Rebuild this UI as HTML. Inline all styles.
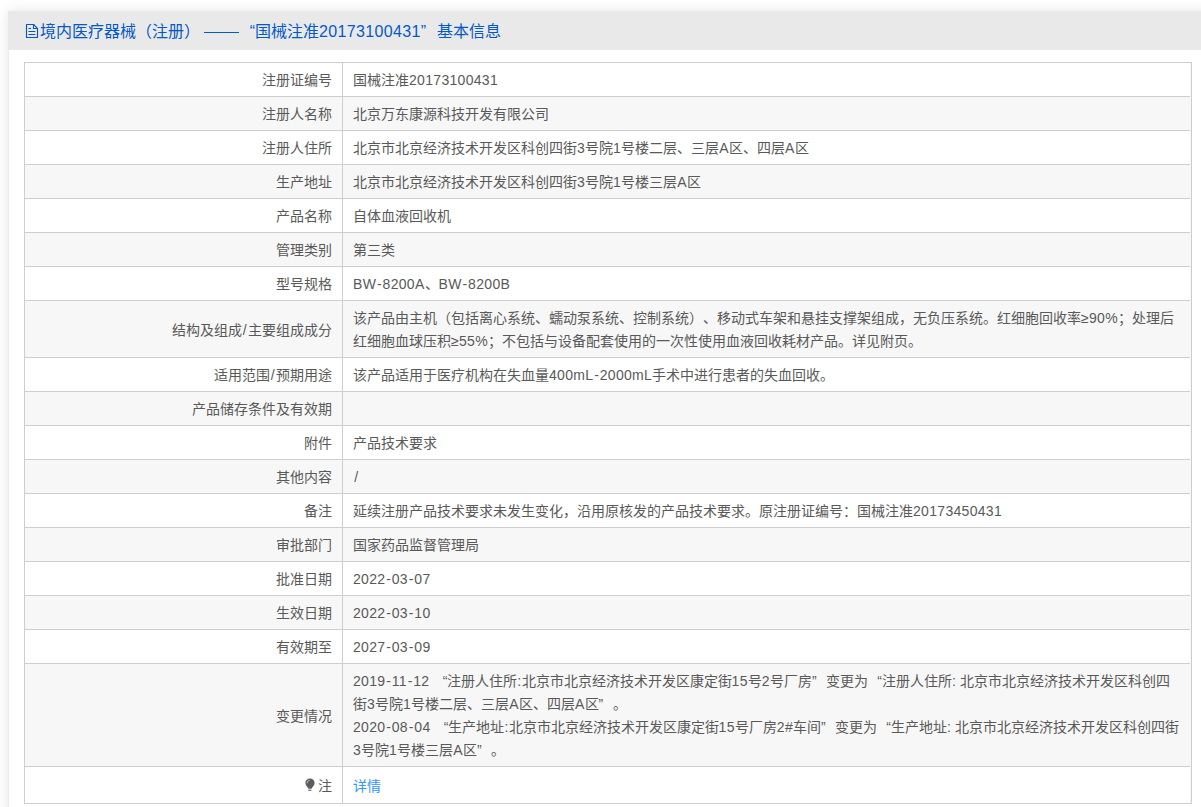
<!DOCTYPE html>
<html lang="zh-CN">
<head>
<meta charset="utf-8">
<title>境内医疗器械（注册）基本信息</title>
<style>
html,body{margin:0;padding:0;}
body{width:1201px;height:807px;overflow:hidden;background:#fff;position:relative;font-family:"Liberation Sans",sans-serif;text-spacing-trim:space-all;}
.panel{position:absolute;left:8px;top:11px;width:1240px;height:860px;background:#fff;box-shadow:0 0 12px rgba(0,0,0,0.10);border-left:1px solid #ebebeb;box-sizing:border-box;}
.head{position:absolute;left:-1px;top:0;width:100%;height:39px;background:#e9e9e9;border-bottom:1px solid #e9ebf3;box-sizing:border-box;}
.head svg{position:absolute;left:16px;top:11px;}
.title{position:absolute;left:32px;top:2px;height:38px;line-height:38px;font-size:16px;color:#0559c6;white-space:nowrap;}
.title .n{letter-spacing:0.36px;}
table{position:absolute;left:15px;top:51px;width:1168px;border-collapse:collapse;table-layout:fixed;font-size:14px;color:#595959;}
td{border:1px solid #cecece;padding:2px 10px 0;line-height:23px;white-space:nowrap;overflow:hidden;}
td.k{text-align:right;width:297px;}
tr:nth-child(even) td{background:#f7f7f7;}
tr{height:34px;}
tr.r2{height:57px;}
tr.r4{height:103px;}
tr.last{height:37px;}
.n{letter-spacing:0.31px;}
.d{display:inline-block;width:39px;height:16px;position:relative;vertical-align:middle;}
.d::after{content:"";position:absolute;left:4px;right:0;top:7px;border-top:1px solid #005cc8;}
.h{padding:0 0.85px;letter-spacing:0;}
.s{padding:0 1.3px;letter-spacing:0;}
.ql,.qr{display:inline-block;width:1em;}
.ql{text-align:right;}
.qr{text-align:left;}
.bulb{vertical-align:-1px;margin-right:2px;}
a{color:#3394fa;text-decoration:none;}
.gap{position:absolute;left:1181px;top:52px;width:1px;height:740px;background:#f4f5fa;}
</style>
</head>
<body>
<div class="panel">
  <div class="head">
    <svg width="16" height="18" viewBox="0 0 16 18"><path d="M2.5 2.5H9.6L13.5 6.3V15.5H2.5Z" fill="none" stroke="#0a56c8" stroke-width="1.15" stroke-linejoin="round"/><path d="M9.5 2.6V6.5H13.4" fill="none" stroke="#0a56c8" stroke-width="1.1"/><path d="M4.9 6.5H6.6M4.9 9.5H10.9M4.9 12.5H10.9" stroke="#0a56c8" stroke-width="1.1" stroke-linecap="round"/></svg>
    <div class="title"><span>境内医疗器械（注册）<span class="d"></span><span class="ql">“</span>国械注准<span class="n">20173100431</span><span class="qr">”</span>基本信息</span></div>
  </div>
  <table>
<tr><td class="k">注册证编号</td><td>国械注准<span class="n">20173100431</span></td></tr>
<tr><td class="k">注册人名称</td><td>北京万东康源科技开发有限公司</td></tr>
<tr><td class="k">注册人住所</td><td>北京市北京经济技术开发区科创四街<span class="n">3</span>号院<span class="n">1</span>号楼二层、三层<span class="n">A</span>区、四层<span class="n">A</span>区</td></tr>
<tr><td class="k">生产地址</td><td>北京市北京经济技术开发区科创四街<span class="n">3</span>号院<span class="n">1</span>号楼三层<span class="n">A</span>区</td></tr>
<tr><td class="k">产品名称</td><td>自体血液回收机</td></tr>
<tr><td class="k">管理类别</td><td>第三类</td></tr>
<tr><td class="k">型号规格</td><td><span class="n">BW<span class="h">-</span>8200A</span>、<span class="n">BW<span class="h">-</span>8200B</span></td></tr>
<tr class="r2"><td class="k">结构及组成<span class="n"><span class="s">/</span></span>主要组成成分</td><td>该产品由主机（包括离心系统、蠕动泵系统、控制系统）、移动式车架和悬挂支撑架组成，无负压系统。红细胞回收率<span class="n">≥90%</span>；处理后<br>红细胞血球压积<span class="n">≥55%</span>；不包括与设备配套使用的一次性使用血液回收耗材产品。详见附页。</td></tr>
<tr><td class="k">适用范围<span class="n"><span class="s">/</span></span>预期用途</td><td>该产品适用于医疗机构在失血量<span class="n">400mL<span class="h">-</span>2000mL</span>手术中进行患者的失血回收。</td></tr>
<tr><td class="k">产品储存条件及有效期</td><td></td></tr>
<tr><td class="k">附件</td><td>产品技术要求</td></tr>
<tr><td class="k">其他内容</td><td><span class="n"><span class="s">/</span></span></td></tr>
<tr><td class="k">备注</td><td>延续注册产品技术要求未发生变化，沿用原核发的产品技术要求。原注册证编号：国械注准<span class="n">20173450431</span></td></tr>
<tr><td class="k">审批部门</td><td>国家药品监督管理局</td></tr>
<tr><td class="k">批准日期</td><td><span class="n">2022<span class="h">-</span>03<span class="h">-</span>07</span></td></tr>
<tr><td class="k">生效日期</td><td><span class="n">2022<span class="h">-</span>03<span class="h">-</span>10</span></td></tr>
<tr><td class="k">有效期至</td><td><span class="n">2027<span class="h">-</span>03<span class="h">-</span>09</span></td></tr>
<tr class="r4"><td class="k">变更情况</td><td><span class="n">2019<span class="h">-</span>11<span class="h">-</span>12</span> <span class="ql">“</span>注册人住所<span class="n">:</span>北京市北京经济技术开发区康定街<span class="n">15</span>号<span class="n">2</span>号厂房<span class="qr">”</span>变更为<span class="ql">“</span>注册人住所<span class="n">:</span> 北京市北京经济技术开发区科创四<br>街<span class="n">3</span>号院<span class="n">1</span>号楼二层、三层<span class="n">A</span>区、四层<span class="n">A</span>区<span class="qr">”</span>。<br><span class="n">2020<span class="h">-</span>08<span class="h">-</span>04</span> <span class="ql">“</span>生产地址<span class="n">:</span>北京市北京经济技术开发区康定街<span class="n">15</span>号厂房<span class="n">2#</span>车间<span class="qr">”</span>变更为<span class="ql">“</span>生产地址<span class="n">:</span> 北京市北京经济技术开发区科创四街<br><span class="n">3</span>号院<span class="n">1</span>号楼三层<span class="n">A</span>区<span class="qr">”</span>。</td></tr>
<tr class="last"><td class="k"><svg class="bulb" width="11" height="14" viewBox="0 0 11 14"><path d="M0.4 5A4.6 4.6 0 0 1 9.6 5C9.6 7 8.3 8.2 7.2 9.4L6.7 10.7H3.3L2.8 9.4C1.7 8.2 0.4 7 0.4 5Z" fill="#5c5c5c"/><rect x="3.2" y="11.7" width="3.2" height="1.1" fill="#5c5c5c"/><path d="M2.1 5.4A3 3 0 0 1 4.7 2.2" stroke="#c8c8c8" stroke-width="0.9" fill="none"/></svg>注</td><td><a>详情</a></td></tr>
  </table>
  <div class="gap"></div>
</div>
</body>
</html>
